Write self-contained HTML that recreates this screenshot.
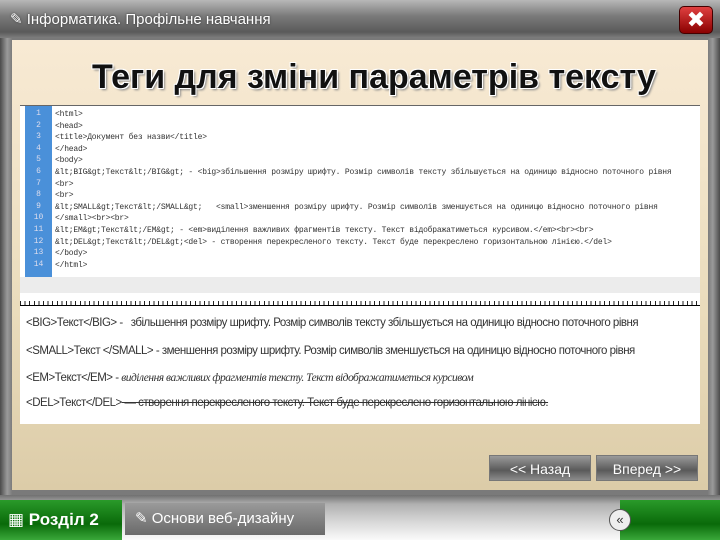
<!DOCTYPE html>
<html><head><meta charset="utf-8"><style>
*{margin:0;padding:0;box-sizing:border-box}
body{width:720px;height:540px;overflow:hidden;position:relative;background:#6a6a6a;font-family:"Liberation Sans","DejaVu Sans",sans-serif}
.top{position:absolute;left:0;top:0;width:720px;height:40px;background:linear-gradient(#b8b8b8,#7a7a7a 40%,#5a5a5a 80%,#8a8a8a)}
.top .t{position:absolute;left:10px;top:10px;color:#fff;font-size:15px;text-shadow:0 0 2px #333}
.x{position:absolute;left:679px;top:6px;width:34px;height:28px;border-radius:5px;background:linear-gradient(#e04040,#8a0000);border:1px solid #400;color:#fff;font-size:22px;font-weight:bold;text-align:center;line-height:26px}
.frame{position:absolute;left:0;top:38px;width:720px;height:460px;background:linear-gradient(90deg,#4a4a4a,#9a9a9a 1%,#7a7a7a 1.7%,#7a7a7a 98.3%,#9a9a9a 99%,#4a4a4a)}
.content{position:absolute;left:12px;top:40px;width:696px;height:450px;background:linear-gradient(#f8ead4,#eadcbc 60%,#dccca8)}
.h1{position:absolute;left:0;top:58px;width:720px;text-align:center;padding-left:28px;font-size:34px;font-weight:bold;color:#111;text-shadow:1px 1px 0 #fff,-1px -1px 0 #fff,1px -1px 0 #fff,-1px 1px 0 #fff,2px 2px 2px #888;font-family:"Liberation Sans Narrow","Liberation Sans",sans-serif}
.code{position:absolute;left:20px;top:105px;width:680px;height:172px;background:#fff;border-top:1px solid #666}
.nums{position:absolute;left:5px;top:0;width:27px;height:172px;background:#4a90d9;color:#dde;font:8px "Liberation Mono",monospace;text-align:center;padding-top:2px}
.nums div,.lines div{height:11.6px;line-height:11.6px}
.lines{position:absolute;left:35px;top:3px;font:8px "Liberation Mono",monospace;color:#333;white-space:pre;letter-spacing:-0.2px}
.scr{position:absolute;left:20px;top:277px;width:680px;height:16px;background:#ececec}
.ruler{position:absolute;left:20px;top:293px;width:680px;height:13px;background:repeating-linear-gradient(90deg,#222 0 1px,transparent 1px 4.6px) bottom/100% 4px no-repeat,#fff;border-bottom:1px solid #000}
.txt{position:absolute;left:20px;top:306px;width:680px;height:118px;background:#fff;font-size:11.5px;color:#333}
.txt div{position:absolute;left:6px;white-space:nowrap;letter-spacing:-0.5px}
.btn{position:absolute;top:455px;height:26px;background:linear-gradient(#9a9a9a,#5a5a5a 60%,#8a8a8a);color:#fff;font-size:14px;text-align:center;line-height:26px;border:1px solid #777}
.bot{position:absolute;left:0;top:495px;width:720px;height:45px;background:linear-gradient(#707070,#b0b0b0 20%,#d8d8d8 60%,#fafafa)}
.g1{position:absolute;left:0;top:500px;width:122px;height:40px;background:linear-gradient(#2a9a2a,#0a6a0a 60%,#3aa83a);color:#fff;font-weight:bold;font-size:17px;line-height:40px;padding-left:8px}
.g2{position:absolute;left:620px;top:500px;width:100px;height:40px;background:linear-gradient(#2a9a2a,#0a6a0a 60%,#3aa83a)}
.tab{position:absolute;left:125px;top:503px;width:200px;height:32px;background:linear-gradient(#9a9a9a,#6a6a6a);color:#fff;font-size:15px;line-height:32px;padding-left:10px}
.circ{position:absolute;left:609px;top:509px;width:22px;height:22px;border-radius:50%;background:#eee;border:1px solid #555;color:#333;font-size:13px;text-align:center;line-height:20px}
</style></head><body>
<div class="top"><div class="t">✎ Інформатика. Профільне навчання</div><div class="x">✖</div></div>
<div class="frame"></div>
<div class="content"></div>
<div class="h1">Теги для зміни параметрів тексту</div>
<div class="code"><div class="nums"><div>1</div><div>2</div><div>3</div><div>4</div><div>5</div><div>6</div><div>7</div><div>8</div><div>9</div><div>10</div><div>11</div><div>12</div><div>13</div><div>14</div></div>
<div class="lines"><div>&lt;html&gt;</div><div>&lt;head&gt;</div><div>&lt;title&gt;Документ без назви&lt;/title&gt;</div><div>&lt;/head&gt;</div><div>&lt;body&gt;</div><div>&amp;lt;BIG&amp;gt;Текст&amp;lt;/BIG&amp;gt; - &lt;big&gt;збільшення розміру шрифту. Розмір символів тексту збільшується на одиницю відносно поточного рівня</div><div>&lt;br&gt;</div><div>&lt;br&gt;</div><div>&amp;lt;SMALL&amp;gt;Текст&amp;lt;/SMALL&amp;gt;   &lt;small&gt;зменшення розміру шрифту. Розмір символів зменшується на одиницю відносно поточного рівня</div><div>&lt;/small&gt;&lt;br&gt;&lt;br&gt;</div><div>&amp;lt;EM&amp;gt;Текст&amp;lt;/EM&amp;gt; - &lt;em&gt;виділення важливих фрагментів тексту. Текст відображатиметься курсивом.&lt;/em&gt;&lt;br&gt;&lt;br&gt;</div><div>&amp;lt;DEL&amp;gt;Текст&amp;lt;/DEL&amp;gt;&lt;del&gt; - створення перекресленого тексту. Текст буде перекреслено горизонтальною лінією.&lt;/del&gt;</div><div>&lt;/body&gt;</div><div>&lt;/html&gt;</div></div></div>
<div class="scr"></div>
<div class="ruler"></div>
<div class="txt">
<div style="top:11px">&lt;BIG&gt;Текст&lt;/BIG&gt; -&nbsp;&nbsp; збільшення розміру шрифту. Розмір символів тексту збільшується на одиницю відносно поточного рівня</div>
<div style="top:39px">&lt;SMALL&gt;Текст &lt;/SMALL&gt; - зменшення розміру шрифту. Розмір символів зменшується на одиницю відносно поточного рівня</div>
<div style="top:66px">&lt;EM&gt;Текст&lt;/EM&gt; - <i style="font-family:'Liberation Serif',serif">виділення важливих фрагментів тексту. Текст відображатиметься курсивом</i></div>
<div style="top:91px">&lt;DEL&gt;Текст&lt;/DEL&gt;<s> — створення перекресленого тексту. Текст буде перекреслено горизонтальною лінією.</s></div>
</div>
<div class="btn" style="left:489px;width:102px">&lt;&lt; Назад</div>
<div class="btn" style="left:596px;width:102px">Вперед &gt;&gt;</div>
<div class="bot"></div>
<div class="g1">▦ Розділ 2</div>
<div class="g2"></div>
<div class="tab">✎ Основи веб-дизайну</div>
<div class="circ">«</div>
</body></html>
